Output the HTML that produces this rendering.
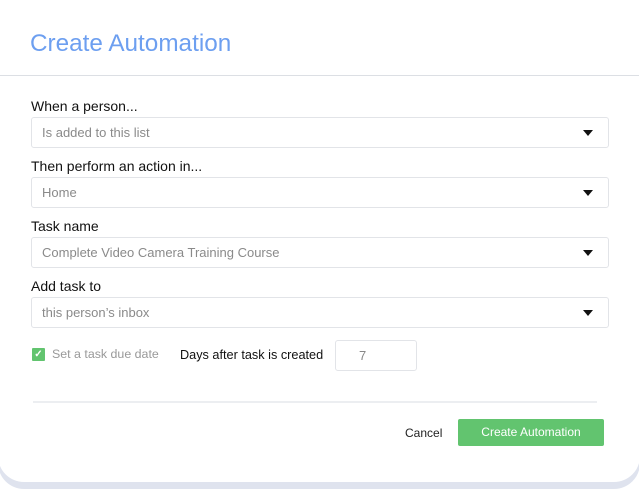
<!DOCTYPE html>
<html><head><style>
body{margin:0;width:639px;height:499px;background:#fff;font-family:"Liberation Sans",sans-serif;position:relative;overflow:hidden}
.card{position:absolute;left:-2px;top:12px;width:642px;height:470px;background:#fff;border-radius:0 0 26px 26px;box-shadow:0 7px 0 #dfe3ee}
.t{position:absolute;left:30px;top:30px;font-size:24.3px;color:#6d9ff0}
.hr{position:absolute;left:0;top:75px;width:639px;height:1px;background:#dcdfe4}
.l{position:absolute;left:31px;font-size:14px;color:#111}
.f{position:absolute;left:31px;width:578px;height:31px;border:1px solid #e2e4e8;border-radius:3px;box-sizing:border-box;font-size:13px;color:#8a8a8a;line-height:29px;padding-left:10px}
.f:after{content:"";position:absolute;right:15px;top:12px;border-left:5px solid transparent;border-right:5px solid transparent;border-top:6px solid #111}
</style></head><body>
<div class="card"></div>
<div class="t">Create Automation</div>
<div class="hr"></div>
<div class="l" style="top:98px">When a person...</div>
<div class="f" style="top:117px">Is added to this list</div>
<div class="l" style="top:158px">Then perform an action in...</div>
<div class="f" style="top:177px">Home</div>
<div class="l" style="top:218px">Task name</div>
<div class="f" style="top:237px">Complete Video Camera Training Course</div>
<div class="l" style="top:278px">Add task to</div>
<div class="f" style="top:297px">this person’s inbox</div>
<div style="position:absolute;left:32px;top:348px;width:13px;height:13px;background:#62c46f;border-radius:1px;color:#fff;font-size:10px;font-weight:bold;text-align:center;line-height:13px">✓</div>
<div style="position:absolute;left:52px;top:347px;font-size:12.4px;color:#999">Set a task due date</div>
<div style="position:absolute;left:180px;top:348px;font-size:12.7px;color:#111">Days after task is created</div>
<div style="position:absolute;left:335px;top:340px;width:82px;height:31px;border:1px solid #e2e4e8;border-radius:3px;box-sizing:border-box;font-size:13px;color:#888;line-height:29px;padding-left:23px">7</div>
<div style="position:absolute;left:33px;top:401px;width:564px;height:2px;background:#eceef1"></div>
<div style="position:absolute;left:405px;top:426px;font-size:12px;color:#222">Cancel</div>
<div style="position:absolute;left:458px;top:419px;width:146px;height:27px;background:#62c46f;border-radius:2px;color:#fff;font-size:12px;text-align:center;line-height:27px">Create Automation</div>
</body></html>
